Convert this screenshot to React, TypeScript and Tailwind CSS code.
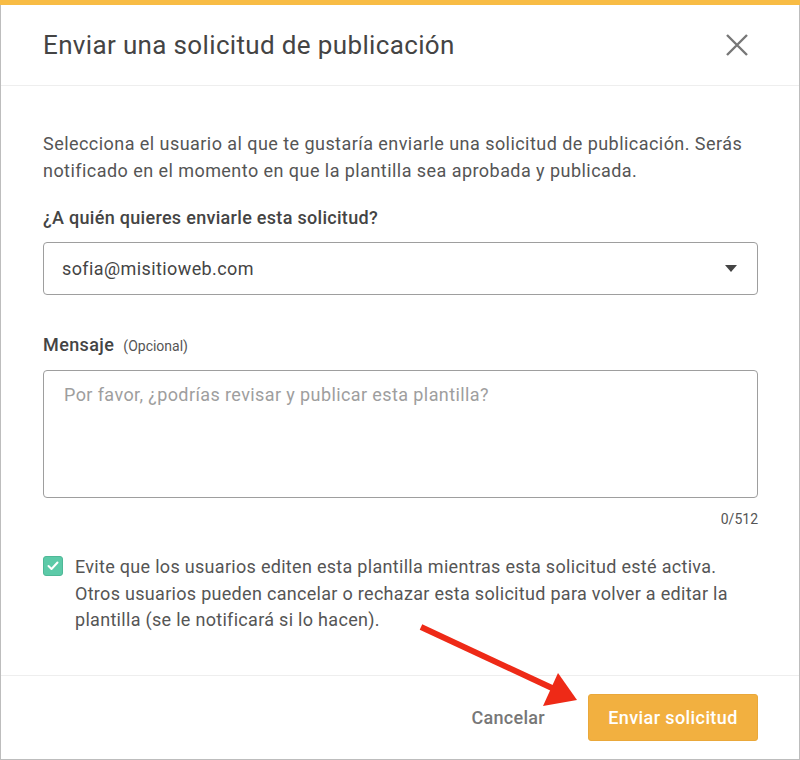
import React from "react";

export default function App() {
  return (
    <div
      className="relative w-[800px] h-[760px] bg-white overflow-hidden"
      style={{ fontFamily: "Roboto, 'Noto Sans', sans-serif" }}
    >
      <div className="flex flex-col h-full border-x border-b border-[#bdbdbd]">
        <div className="h-[5px] bg-[#f8bc45] shrink-0 -mx-px" />
        <div className="flex items-center justify-between h-[81px] pl-[42px] pr-[50px] border-b border-[#eeeeee] shrink-0">
          <h1 className="text-[26px] text-[#444444] leading-none tracking-[0.35px]">
            Enviar una solicitud de publicación
          </h1>
          <svg width="24" height="24" viewBox="0 0 24 24" className="text-[#777777]">
            <path d="M2 2 L22 22 M22 2 L2 22" stroke="currentColor" strokeWidth="2.4" fill="none" />
          </svg>
        </div>
        <div className="flex-1 pl-[42px] pr-[30px] pt-[44px] text-[18px] text-[#555555]">
          <p className="leading-[27px] tracking-[0.45px] whitespace-nowrap">
            Selecciona el usuario al que te gustaría enviarle una solicitud de publicación. Serás
            <br />
            notificado en el momento en que la plantilla sea aprobada y publicada.
          </p>
          <div className="mt-[22px] mr-[11px]">
            <div className="font-medium text-[#444444] leading-[24px] tracking-[0.3px]">
              ¿A quién quieres enviarle esta solicitud?
            </div>
            <div className="mt-[12px] h-[53px] border border-[#9e9e9e] rounded-[4px] flex items-center justify-between pl-[18px] pr-[20px] text-[#444444] tracking-[0.4px]">
              <span>sofia@misitioweb.com</span>
              <svg width="12" height="7" viewBox="0 0 12 7">
                <path d="M0 0 L12 0 L6 7 Z" fill="#444444" />
              </svg>
            </div>
            <div className="mt-[38px] flex items-baseline gap-[9px] leading-[24px]">
              <span className="font-medium text-[#444444] tracking-[0.4px]">Mensaje</span>
              <span className="text-[14px] text-[#555555]">(Opcional)</span>
            </div>
            <div className="mt-[12px] h-[128px] border border-[#9e9e9e] rounded-[4px] pl-[20px] pt-[12px] text-[#9e9e9e] leading-[24px] tracking-[0.4px]">
              Por favor, ¿podrías revisar y publicar esta plantilla?
            </div>
            <div className="mt-[11px] text-right text-[14px] text-[#555555] leading-[20px]">0/512</div>
            <div className="mt-[25px] flex gap-[12px]">
              <div className="mt-[2px] w-[20px] h-[20px] rounded-[3px] bg-[#5ccaa8] border border-[#4fb897] flex items-center justify-center shrink-0">
                <svg width="12" height="10" viewBox="0 0 12 10">
                  <path d="M1.5 5 L4.5 8 L10.5 1.5" stroke="white" strokeWidth="2" fill="none" strokeLinecap="round" strokeLinejoin="round" />
                </svg>
              </div>
              <p className="leading-[26.5px] tracking-[0.3px] whitespace-nowrap">
                Evite que los usuarios editen esta plantilla mientras esta solicitud esté activa.
                <br />
                Otros usuarios pueden cancelar o rechazar esta solicitud para volver a editar la
                <br />
                plantilla (se le notificará si lo hacen).
              </p>
            </div>
          </div>
        </div>
        <div className="h-[84px] border-t border-[#eeeeee] flex items-center justify-end gap-[43px] pr-[41px] shrink-0">
          <button className="text-[18px] font-medium text-[#777777] tracking-[0.3px]">Cancelar</button>
          <button className="h-[47px] w-[170px] rounded-[3px] bg-[#f2b040] border border-[#eaa83a] text-white text-[18px] font-medium tracking-[0.4px]">
            Enviar solicitud
          </button>
        </div>
      </div>
      <svg className="absolute left-0 top-0 pointer-events-none" width="800" height="760">
        <line x1="421" y1="627" x2="552" y2="688" stroke="#ee2a17" strokeWidth="6" />
        <polygon points="577,700 543,706 558,673" fill="#ee2a17" />
      </svg>
    </div>
  );
}
